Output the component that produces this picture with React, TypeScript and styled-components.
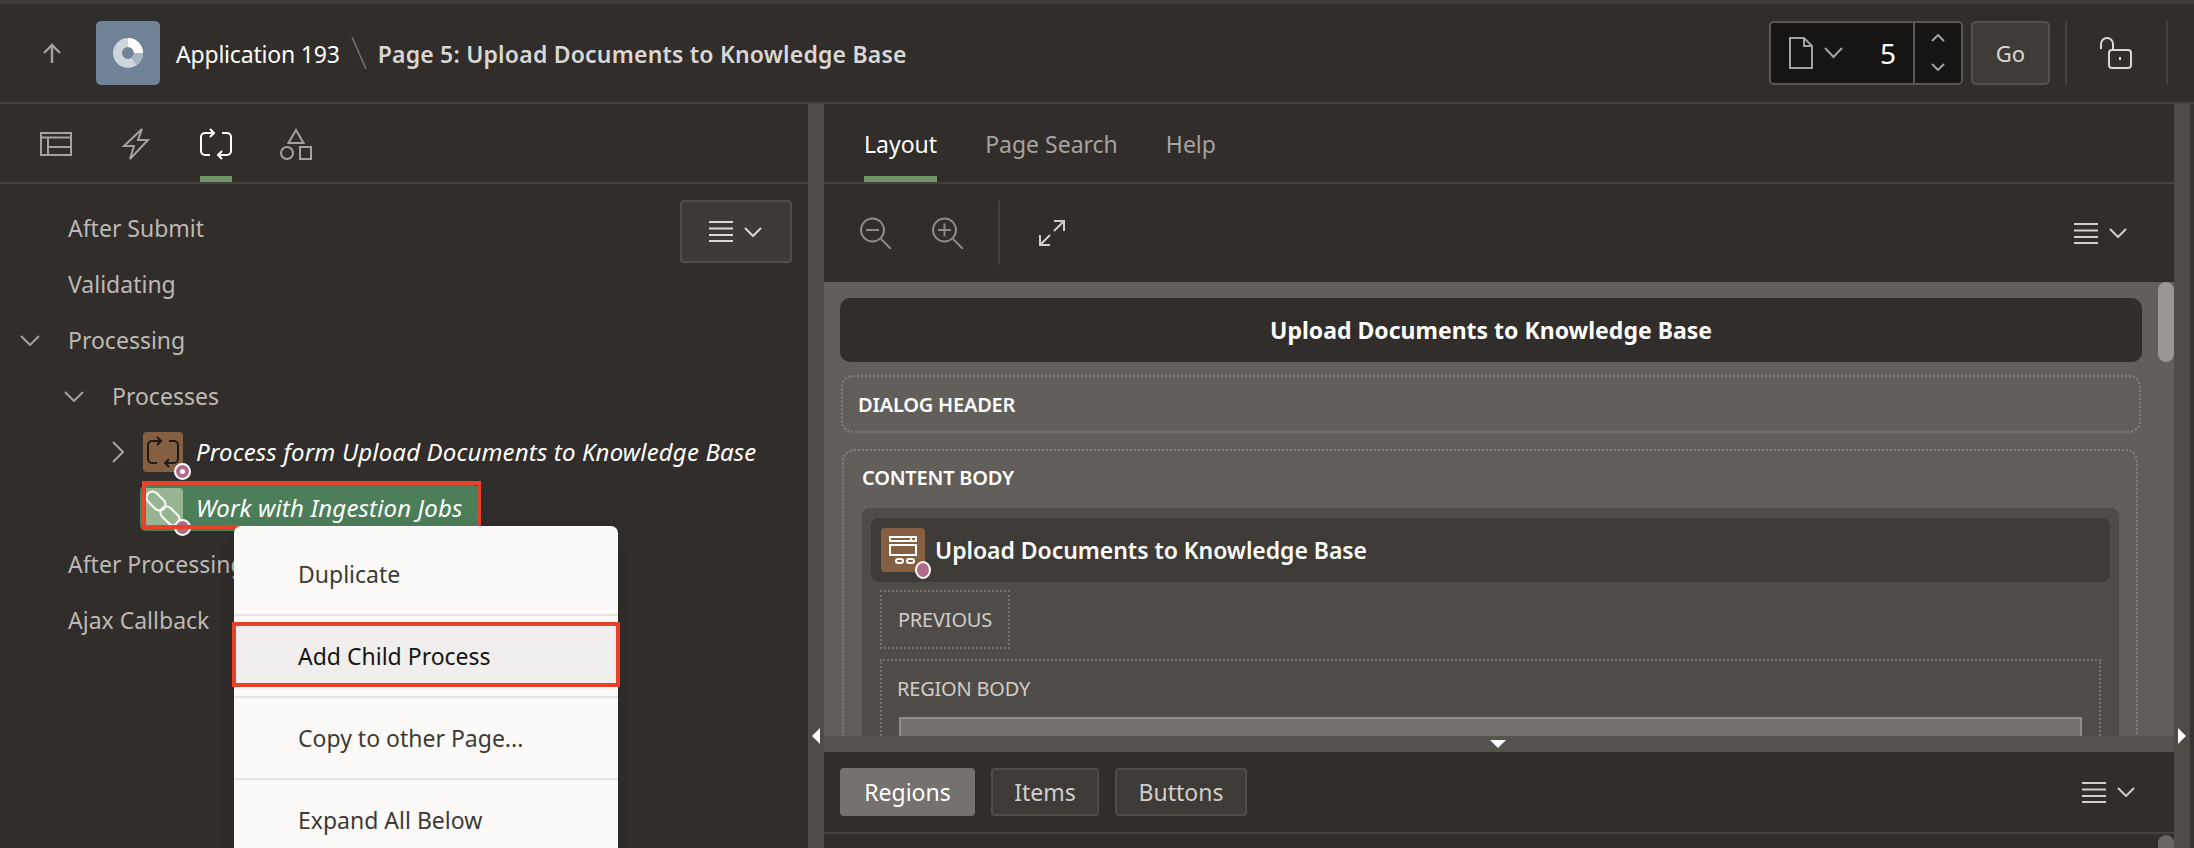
import React from "react"
import styled, { createGlobalStyle } from "styled-components"

const GlobalStyle = createGlobalStyle`
  html, body {
    margin: 0;
    padding: 0;
    background: #312d2a;
  }
  * {
    box-sizing: border-box;
  }
`

const Page = styled.div`
  width: 2194px;
  height: 848px;
  overflow: hidden;
  display: flex;
  flex-direction: column;
  background: #312d2a;
  border-top: 4px solid #403d39;
  font-family: "Noto Sans", "Open Sans", sans-serif;
`

/* top bar */
const Header = styled.header`
  height: 100px;
  flex: none;
  display: flex;
  align-items: center;
  padding: 0 26px 0 43px;
  border-bottom: 2px solid #45413d;
`

const UpButton = styled.div`
  width: 18px;
  height: 20px;
  color: #a5a29e;
  margin-right: 35px;
  display: flex;
`

const AppTile = styled.div`
  width: 64px;
  height: 64px;
  border-radius: 5px;
  background: #6f8296;
  display: flex;
  align-items: center;
  justify-content: center;
  margin-right: 16px;
`

const AppName = styled.span`
  padding-top: 2px;
  font-size: 23px;
  letter-spacing: -0.2px;
  color: #ffffff;
`

const Slash = styled.span`
  width: 16px;
  height: 32px;
  margin: 0 11px;
  display: flex;
  color: #78746f;
`

const PageName = styled.span`
  padding-top: 2px;
  font-size: 23px;
  font-weight: 600;
  letter-spacing: 0.2px;
  color: #d9d7d5;
`

const HeaderRight = styled.div`
  margin-left: auto;
  display: flex;
  align-items: stretch;
  height: 64px;
`

const PageBox = styled.div`
  width: 194px;
  display: flex;
  border: 2px solid #5a5652;
  border-radius: 5px;
  background: #161513;
`

const PageSelect = styled.div`
  flex: 1;
  display: flex;
  align-items: center;
  padding-left: 18px;
  color: #a5a29e;
`

const PageNumber = styled.span`
  margin-left: auto;
  padding-right: 17px;
  font-size: 28px;
  color: #ffffff;
`

const Stepper = styled.div`
  width: 48px;
  display: flex;
  flex-direction: column;
  align-items: center;
  justify-content: space-between;
  padding: 11px 0 12px;
  border-left: 2px solid #5a5652;
  color: #a5a29e;
`

const GoButton = styled.div`
  width: 79px;
  margin-left: 8px;
  display: flex;
  align-items: center;
  justify-content: center;
  border: 2px solid #55514d;
  border-radius: 5px;
  background: #3e3b37;
  font-size: 22px;
  color: #d9d7d5;
`

const HeaderDivider = styled.div`
  width: 2px;
  background: #45413d;
  margin-left: ${(p: { $gap: number }) => p.$gap}px;
`

const LockBox = styled.div`
  width: 32px;
  margin-left: 33px;
  display: flex;
  align-items: center;
  color: #d9d7d5;
`

/* panels */
const Main = styled.div`
  flex: 1;
  min-height: 0;
  display: flex;
  position: relative;
`

const LeftPanel = styled.section`
  width: 808px;
  flex: none;
  display: flex;
  flex-direction: column;
`

const RightPanel = styled.section`
  width: 1350px;
  flex: none;
  display: flex;
  flex-direction: column;
`

const VSplit = styled.div`
  width: 16px;
  flex: none;
  background: #4f4b47;
  position: relative;
`

const Gutter = styled.div`
  width: 4px;
  flex: none;
  background: #37332f;
`

const SideArrow = styled.span<{ $side: "left" | "right" }>`
  position: absolute;
  top: 624px;
  left: 4px;
  width: 0;
  height: 0;
  border-top: 8px solid transparent;
  border-bottom: 8px solid transparent;
  border-${(p) => p.$side === "left" ? "right" : "left"}: 8px solid #ffffff;
`

const TabBar = styled.nav<{ $gap: number; $start: number }>`
  height: 80px;
  flex: none;
  display: flex;
  gap: ${(p) => p.$gap}px;
  padding-left: ${(p) => p.$start}px;
  border-bottom: 2px solid #45413d;
`

const IconTab = styled.div<{ $active?: boolean }>`
  width: 32px;
  padding-top: 24px;
  border-bottom: 6px solid ${(p) => (p.$active ? "#6f9467" : "transparent")};
  color: ${(p) => (p.$active ? "#ffffff" : "#a5a29e")};
`

const TextTab = styled.div<{ $active?: boolean }>`
  display: flex;
  align-items: center;
  padding-top: 8px;
  font-size: 23px;
  border-bottom: 6px solid ${(p) => (p.$active ? "#6f9467" : "transparent")};
  color: ${(p) => (p.$active ? "#ffffff" : "#a5a29e")};
`

/* tree */
const Tree = styled.div`
  flex: 1;
  position: relative;
  padding-top: 16px;
`

const ActionsButton = styled.div`
  position: absolute;
  top: 16px;
  right: 16px;
  width: 112px;
  height: 63px;
  display: flex;
  align-items: center;
  justify-content: center;
  gap: 11px;
  padding-right: 2px;
  border: 2px solid #504c48;
  border-radius: 4px;
  background: #3d3a36;
  color: #d9d7d5;
`

const Row = styled.div<{ $level: number }>`
  height: 56px;
  display: flex;
  align-items: center;
  padding-left: ${(p) => 16 + p.$level * 44}px;
`

const Twisty = styled.span`
  width: 28px;
  flex: none;
  display: flex;
  justify-content: center;
  color: #a5a29e;
`

const RowLabel = styled.span`
  margin-left: 24px;
  font-size: 23px;
  color: #bcb9b5;
`

const Node = styled.div<{ $selected?: boolean }>`
  position: relative;
  height: 46px;
  margin-left: 8px;
  padding: 0 16px 0 3px;
  display: flex;
  align-items: center;
  gap: 12px;
  border-radius: 6px;
  background: ${(p) => (p.$selected ? "#4c7e59" : "transparent")};
`

const NodeIcon = styled.span<{ $tone: "brown" | "green" }>`
  position: relative;
  width: 40px;
  height: 40px;
  display: flex;
  align-items: center;
  justify-content: center;
  border-radius: 4px;
  background: ${(p) => (p.$tone === "brown" ? "#855f41" : "#97b591")};
  color: ${(p) => (p.$tone === "brown" ? "#1d1a18" : "#ffffff")};
`

const Badge = styled.span<{ $dot?: boolean }>`
  position: absolute;
  left: 31px;
  top: 31px;
  width: 17px;
  height: 17px;
  border-radius: 50%;
  border: 2px solid #ffffff;
  background: #b36a8a;
  display: flex;
  align-items: center;
  justify-content: center;
  &::after {
    content: "";
    width: 5px;
    height: 5px;
    border-radius: 50%;
    background: ${(p) => (p.$dot ? "#ffffff" : "transparent")};
  }
`

const NodeLabel = styled.span`
  padding: 0 0 2px 1px;
  font-size: 24px;
  font-style: italic;
  letter-spacing: 0.15px;
  color: #ffffff;
`

const RedFrame = styled.span`
  position: absolute;
  left: 2px;
  right: -2px;
  top: -4px;
  bottom: 2px;
  border: 4px solid #e8412a;
`

/* context menu */
const Menu = styled.ul`
  position: absolute;
  left: 234px;
  top: 342px;
  width: 384px;
  margin: 0;
  padding: 8px 0 0;
  list-style: none;
  background: #fbfaf8;
  border-radius: 7px 7px 0 0;
  box-shadow: 0 4px 18px rgba(0, 0, 0, 0.12);
`

const MenuItem = styled.li<{ $hot?: boolean }>`
  position: relative;
  height: 80px;
  display: flex;
  align-items: center;
  padding-left: 64px;
  font-size: 23px;
  color: ${(p) => (p.$hot ? "#161513" : "#3d3a36")};
  ${(p) =>
    p.$hot &&
    `&::before {
      content: "";
      position: absolute;
      left: -2px;
      right: -2px;
      top: 6px;
      bottom: 9px;
      background: #f1efee;
      border: 4px solid #e8412a;
    }`}
`

const MenuText = styled.span`
  position: relative;
`

const MenuSeparator = styled.li`
  height: 2px;
  background: #e5e3e0;
`

/* layout editor */
const Toolbar = styled.div`
  height: 98px;
  flex: none;
  display: flex;
  align-items: center;
  padding: 0 47px 0 36px;
  color: #8e8a85;
`

const ToolButton = styled.span<{ $gap: number }>`
  display: flex;
  margin-right: ${(p) => p.$gap}px;
`

const ToolDivider = styled.span`
  width: 2px;
  height: 64px;
  background: #45413d;
  margin-right: 38px;
`

const ExpandButton = styled.span`
  display: flex;
  color: #d0cdca;
`

const MenuGroup = styled.span`
  margin-left: auto;
  display: flex;
  align-items: center;
  gap: 11px;
  color: #d0cdca;
`

const Canvas = styled.div`
  flex: 1;
  min-height: 0;
  display: flex;
  overflow: hidden;
  background: #625e59;
`

const CanvasBody = styled.div`
  flex: 1;
  min-width: 0;
  padding: 16px 16px 0;
`

const Scrollbar = styled.div`
  width: 16px;
  flex: none;
`

const ScrollThumb = styled.div`
  height: 80px;
  border-radius: 8px;
  background: #9a9692;
`

const DialogTitle = styled.div`
  height: 64px;
  display: flex;
  align-items: center;
  justify-content: center;
  border-radius: 10px;
  background: #312d2a;
  font-size: 23px;
  font-weight: 700;
  color: #ffffff;
`

const DottedBox = styled.div`
  border: 2px dotted rgba(255, 255, 255, 0.22);
`

const DialogHeader = styled(DottedBox)`
  height: 58px;
  margin: 13px 1px 0;
  padding-left: 15px;
  display: flex;
  align-items: center;
  border-radius: 12px;
  font-size: 20px;
  font-weight: 600;
  letter-spacing: -0.2px;
  color: #ffffff;
`

const ContentBody = styled(DottedBox)`
  margin: 16px 4px 0 2px;
  height: 400px;
  padding: 0 17px 0 18px;
  border-radius: 12px;
`

const BodyLabel = styled.div`
  height: 57px;
  padding-top: 14px;
  font-size: 20px;
  line-height: 26px;
  font-weight: 600;
  letter-spacing: -0.2px;
  color: #ffffff;
`

const RegionCard = styled.div`
  height: 400px;
  padding: 10px 9px;
  border-radius: 8px;
  background: #4f4b47;
`

const RegionTitle = styled.div`
  height: 64px;
  display: flex;
  align-items: center;
  gap: 10px;
  padding-left: 10px;
  border-radius: 8px;
  background: #3e3b36;
  font-size: 23px;
  font-weight: 600;
  letter-spacing: -0.05px;
  color: #ffffff;
`

const RegionIcon = styled.span`
  position: relative;
  width: 44px;
  height: 44px;
  display: flex;
  border-radius: 4px;
  background: #855f41;
  color: #ffffff;
`

const RegionBadge = styled(Badge)`
  left: 34px;
  top: 33px;
  width: 16px;
  height: 18px;
`

const SlotLabel = styled.div`
  font-size: 20px;
  letter-spacing: -0.2px;
  color: #d0cdca;
`

const PreviousSlot = styled(DottedBox)`
  width: 130px;
  height: 59px;
  margin: 8px 0 0 9px;
  display: flex;
  align-items: center;
  justify-content: center;
`

const RegionBody = styled(DottedBox)`
  height: 200px;
  margin: 10px 9px 0 9px;
  padding: 14px 17px 0 15px;
`

const ItemArea = styled.div`
  height: 100px;
  margin: 15px 0 0 2px;
  border: 2px solid #908c87;
  background: #75716c;
`

const HSplit = styled.div`
  height: 16px;
  flex: none;
  display: flex;
  justify-content: center;
  background: #56524d;
`

const DownArrow = styled.span`
  width: 0;
  height: 0;
  margin: 4px 0 0 -2px;
  border-left: 8px solid transparent;
  border-right: 8px solid transparent;
  border-top: 8px solid #ffffff;
`

const Gallery = styled.div`
  height: 96px;
  flex: none;
  display: flex;
  flex-direction: column;
`

const GalleryBar = styled.div`
  height: 82px;
  flex: none;
  display: flex;
  align-items: center;
  gap: 16px;
  padding: 0 39px 0 16px;
  border-bottom: 2px solid #45413d;
`

const GalleryTab = styled.div<{ $active?: boolean; $width: number }>`
  width: ${(p) => p.$width}px;
  height: 48px;
  display: flex;
  align-items: center;
  justify-content: center;
  border-radius: 4px;
  border: 2px solid ${(p) => (p.$active ? "#75716c" : "#4f4b47")};
  background: ${(p) => (p.$active ? "#75716c" : "#3e3b37")};
  font-size: 23px;
  color: ${(p) => (p.$active ? "#ffffff" : "#d0cdca")};
`

const GalleryScroll = styled.div`
  flex: 1;
  display: flex;
  justify-content: flex-end;
`

const GalleryThumb = styled.div`
  width: 16px;
  margin-top: 1px;
  border-radius: 8px 8px 0 0;
  background: #6a6661;
`

type ChevronProps = { dir: "up" | "down" | "right"; w: number; h: number }

const Chevron = ({ dir, w, h }: ChevronProps) => {
  const d =
    dir === "up"
      ? `M1 ${h - 1} L${w / 2} 1 L${w - 1} ${h - 1}`
      : dir === "down"
        ? `M1 1 L${w / 2} ${h - 1} L${w - 1} 1`
        : `M1 1 L${w - 1} ${h / 2} L1 ${h - 1}`
  return (
    <svg width={w} height={h} fill="none" stroke="currentColor" strokeWidth="2">
      <path d={d} />
    </svg>
  )
}

const Lines = () => (
  <svg width="24" height="21" fill="currentColor">
    <rect y="0" width="24" height="2" />
    <rect y="6.5" width="24" height="2" />
    <rect y="13" width="24" height="2" />
    <rect y="19" width="24" height="2" />
  </svg>
)

const CycleIcon = () => (
  <svg width="32" height="32" viewBox="0 0 32 32" fill="none" stroke="currentColor" strokeWidth="2">
    <path d="M14 5 H5 a4 4 0 0 0 -4 4 V23 a4 4 0 0 0 4 4 H10" />
    <path d="M10 1 L14 5 L10 9" />
    <path d="M22 5 H27 a4 4 0 0 1 4 4 V23 a4 4 0 0 1 -4 4 H18" />
    <path d="M22 23 L18 27 L22 31" />
  </svg>
)

const LinkIcon = () => (
  <svg width="40" height="40" viewBox="0 0 40 40" fill="none" stroke="currentColor" strokeWidth="2">
    <rect x="2" y="7" width="22" height="12" rx="6" transform="rotate(45 13 13)" />
    <rect x="16" y="22" width="22" height="12" rx="6" transform="rotate(45 27 28)" />
  </svg>
)

const Magnifier = ({ plus }: { plus?: boolean }) => (
  <svg width="32" height="32" fill="none" stroke="currentColor" strokeWidth="2">
    <circle cx="12.5" cy="13" r="11.5" />
    <path d="M21 22 L31 32" />
    <path d="M6 13 H19" />
    {plus && <path d="M12.5 6.5 V19.5" />}
  </svg>
)

export default function App() {
  return (
    <Page>
      <GlobalStyle />
      <Header>
        <UpButton>
          <svg width="18" height="20" fill="none" stroke="currentColor" strokeWidth="2.4">
            <path d="M9 20 V2 M1 10 L9 2 L17 10" />
          </svg>
        </UpButton>
        <AppTile>
          <svg width="32" height="32" viewBox="0 0 32 32" fill="none" strokeWidth="9">
            <circle cx="16" cy="16" r="10.5" stroke="#ced6dd" />
            <path d="M16 5.5 A10.5 10.5 0 0 1 26.5 16" stroke="#ffffff" />
            <path d="M26.5 16 A10.5 10.5 0 0 1 22 24.6" stroke="#a9b5c0" />
          </svg>
        </AppTile>
        <AppName>Application 193</AppName>
        <Slash>
          <svg width="16" height="32" fill="none" stroke="currentColor" strokeWidth="1.5">
            <path d="M1 0 L15 32" />
          </svg>
        </Slash>
        <PageName>Page 5: Upload Documents to Knowledge Base</PageName>
        <HeaderRight>
          <PageBox>
            <PageSelect>
              <svg width="24" height="32" fill="none" stroke="currentColor" strokeWidth="2">
                <path d="M1 1 H15 L23 9 V31 H1 Z M15 1 V9 H23" />
              </svg>
              <svg width="30" height="12" fill="none" stroke="currentColor" strokeWidth="2">
                <path d="M12 1 L20.5 10 L29 1" />
              </svg>
              <PageNumber>5</PageNumber>
            </PageSelect>
            <Stepper>
              <Chevron dir="up" w={14} h={8} />
              <Chevron dir="down" w={14} h={8} />
            </Stepper>
          </PageBox>
          <GoButton>Go</GoButton>
          <HeaderDivider $gap={15} />
          <LockBox>
            <svg width="32" height="32" fill="none" stroke="currentColor" strokeWidth="2">
              <path d="M1 12 V7 a6 6 0 0 1 12 0 V13" />
              <rect x="9" y="13" width="22" height="18" rx="3" />
              <path d="M20 20 V23" />
            </svg>
          </LockBox>
          <HeaderDivider $gap={34} />
        </HeaderRight>
      </Header>

      <Main>
        <LeftPanel>
          <TabBar $gap={48} $start={40}>
            <IconTab>
              <svg width="32" height="32" fill="none" stroke="currentColor" strokeWidth="2">
                <path d="M1 5 H31 V27 H1 Z M1 9.5 H31 M8 9.5 V27 M8 19 H31" />
              </svg>
            </IconTab>
            <IconTab>
              <svg width="32" height="32" fill="none" stroke="currentColor" strokeWidth="2">
                <path d="M22 1 L4 18 H14 L10 31 L28 12 H18 Z" />
              </svg>
            </IconTab>
            <IconTab $active>
              <CycleIcon />
            </IconTab>
            <IconTab>
              <svg width="32" height="32" fill="none" stroke="currentColor" strokeWidth="2">
                <path d="M16 2 L23.5 15 H8.5 Z" />
                <circle cx="7" cy="25" r="6" />
                <rect x="20" y="19" width="11" height="12" />
              </svg>
            </IconTab>
          </TabBar>
          <Tree>
            <ActionsButton>
              <Lines />
              <Chevron dir="down" w={18} h={10} />
            </ActionsButton>
            <Row $level={0}>
              <Twisty />
              <RowLabel>After Submit</RowLabel>
            </Row>
            <Row $level={0}>
              <Twisty />
              <RowLabel>Validating</RowLabel>
            </Row>
            <Row $level={0}>
              <Twisty>
                <Chevron dir="down" w={20} h={11} />
              </Twisty>
              <RowLabel>Processing</RowLabel>
            </Row>
            <Row $level={1}>
              <Twisty>
                <Chevron dir="down" w={20} h={11} />
              </Twisty>
              <RowLabel>Processes</RowLabel>
            </Row>
            <Row $level={2}>
              <Twisty>
                <Chevron dir="right" w={12} h={22} />
              </Twisty>
              <Node>
                <NodeIcon $tone="brown">
                  <CycleIcon />
                  <Badge $dot />
                </NodeIcon>
                <NodeLabel>Process form Upload Documents to Knowledge Base</NodeLabel>
              </Node>
            </Row>
            <Row $level={2}>
              <Twisty />
              <Node $selected>
                <NodeIcon $tone="green">
                  <LinkIcon />
                  <Badge />
                </NodeIcon>
                <NodeLabel>Work with Ingestion Jobs</NodeLabel>
                <RedFrame />
              </Node>
            </Row>
            <Row $level={0}>
              <Twisty />
              <RowLabel>After Processing</RowLabel>
            </Row>
            <Row $level={0}>
              <Twisty />
              <RowLabel>Ajax Callback</RowLabel>
            </Row>
            <Menu>
              <MenuItem><MenuText>Duplicate</MenuText></MenuItem>
              <MenuSeparator />
              <MenuItem $hot><MenuText>Add Child Process</MenuText></MenuItem>
              <MenuSeparator />
              <MenuItem><MenuText>Copy to other Page...</MenuText></MenuItem>
              <MenuSeparator />
              <MenuItem><MenuText>Expand All Below</MenuText></MenuItem>
            </Menu>
          </Tree>
        </LeftPanel>

        <VSplit>
          <SideArrow $side="left" />
        </VSplit>

        <RightPanel>
          <TabBar $gap={48} $start={40}>
            <TextTab $active>Layout</TextTab>
            <TextTab>Page Search</TextTab>
            <TextTab>Help</TextTab>
          </TabBar>
          <Toolbar>
            <ToolButton $gap={40}>
              <Magnifier />
            </ToolButton>
            <ToolButton $gap={34}>
              <Magnifier plus />
            </ToolButton>
            <ToolDivider />
            <ExpandButton>
              <svg width="28" height="28" fill="none" stroke="currentColor" strokeWidth="2">
                <path d="M16 2 H26 V12 M26 2 L16 12" />
                <path d="M2 16 V26 H12 M2 26 L12 16" />
              </svg>
            </ExpandButton>
            <MenuGroup>
              <Lines />
              <Chevron dir="down" w={18} h={10} />
            </MenuGroup>
          </Toolbar>
          <Canvas>
            <CanvasBody>
              <DialogTitle>Upload Documents to Knowledge Base</DialogTitle>
              <DialogHeader>DIALOG HEADER</DialogHeader>
              <ContentBody>
                <BodyLabel>CONTENT BODY</BodyLabel>
                <RegionCard>
                  <RegionTitle>
                    <RegionIcon>
                      <svg width="44" height="44" fill="none" stroke="currentColor" strokeWidth="2">
                        <path d="M9 9 H35 V13 H9 Z M30 9 V13" />
                        <rect x="9" y="17" width="26" height="10" />
                        <rect x="15" y="31" width="7" height="4" rx="2" />
                        <rect x="26" y="31" width="7" height="4" rx="2" />
                      </svg>
                      <RegionBadge />
                    </RegionIcon>
                    Upload Documents to Knowledge Base
                  </RegionTitle>
                  <PreviousSlot>
                    <SlotLabel>PREVIOUS</SlotLabel>
                  </PreviousSlot>
                  <RegionBody>
                    <SlotLabel>REGION BODY</SlotLabel>
                    <ItemArea />
                  </RegionBody>
                </RegionCard>
              </ContentBody>
            </CanvasBody>
            <Scrollbar>
              <ScrollThumb />
            </Scrollbar>
          </Canvas>
          <HSplit>
            <DownArrow />
          </HSplit>
          <Gallery>
            <GalleryBar>
              <GalleryTab $active $width={135}>Regions</GalleryTab>
              <GalleryTab $width={108}>Items</GalleryTab>
              <GalleryTab $width={132}>Buttons</GalleryTab>
              <MenuGroup>
                <Lines />
                <Chevron dir="down" w={18} h={10} />
              </MenuGroup>
            </GalleryBar>
            <GalleryScroll>
              <GalleryThumb />
            </GalleryScroll>
          </Gallery>
        </RightPanel>

        <VSplit>
          <SideArrow $side="right" />
        </VSplit>
        <Gutter />
      </Main>
    </Page>
  )
}
